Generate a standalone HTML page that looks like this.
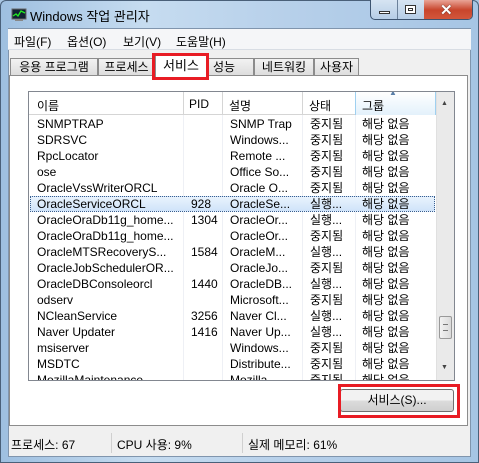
<!DOCTYPE html>
<html><head><meta charset="utf-8"><style>
*{margin:0;padding:0;box-sizing:border-box}
body{width:479px;height:463px;overflow:hidden;position:relative;font-family:"Liberation Sans","Noto Sans CJK KR","NanumGothic",sans-serif;font-size:12px;color:#000;background:#a9c6e3}
.a{position:absolute}
.frame{left:0;top:0;width:479px;height:463px;background:linear-gradient(90deg,#9ebfe0,#c6dcf0 30%,#b7d0ea 60%,#a6c5e4);border:1px solid #4a6079;border-radius:6px 6px 0 0}
.title{left:30px;top:6px;font-size:13px}
.client{left:8px;top:28px;width:463px;height:429px;background:#f0f0f0;border:1px solid #8095ad}
.menu{left:8px;top:29px;width:463px;height:21px;background:#f5f6f8;border-bottom:1px solid #d8dde4}
.menu span{position:absolute;top:4px}
.tab{top:58px;height:18px;border:1px solid #8c8c8c;border-bottom:none;background:linear-gradient(#f2f2f2,#dcdcdc);text-align:center;line-height:17px;font-size:12px}
.panel{left:9px;top:75px;width:459px;height:351px;background:#fff;border:1px solid #8c8c8c}
.list{left:28px;top:91px;width:427px;height:290px;border:1px solid #828790;background:#fff;overflow:hidden}
.hdr{position:absolute;left:0;top:0;height:23px;width:407px;border-bottom:1px solid #d5d5d5;background:#fff}
.hdr span{position:absolute;top:5px}
.vl{position:absolute;top:0;width:1px;height:290px;background:#eef0f5}
.hv{position:absolute;top:0;width:1px;height:23px;background:#d5d5d5}
.row{position:absolute;left:0;width:407px;height:16px;line-height:16px;white-space:nowrap}
.row span{position:absolute;top:0}
.sb{position:absolute;left:407px;top:0;width:18px;height:288px;background:#eaeaea;border-left:1px solid #e0e0e0}
.btn{left:340px;top:389px;width:114px;height:23px;border:1px solid #707070;border-radius:3px;background:linear-gradient(#f2f2f2 50%,#dcdcdc 50%,#cfcfcf);text-align:center;line-height:21px}
.red{border:3px solid #e81c24}
.status{left:9px;top:431px;width:459px;height:24px}
.status span{position:absolute;top:5px}
</style></head><body>
<div class="a frame"></div>
<svg class="a" style="left:11px;top:8px" width="16" height="14"><rect x="1" y="1" width="14" height="10" fill="#123" stroke="#666"/><polyline points="2,8 5,6 7,8 10,3 14,5" fill="none" stroke="#2e2" stroke-width="1.3"/><rect x="4" y="11" width="8" height="2" fill="#888"/></svg>
<div class="a title">Windows 작업 관리자</div>
<div class="a" style="left:370px;top:0;width:103px;height:20px;border:1px solid #3d5470;border-top:none;border-radius:0 0 5px 5px;overflow:hidden;background:linear-gradient(#d6e4f2,#b6cde6)">
<div class="a" style="left:26px;top:0;width:1px;height:20px;background:#6b819a"></div>
<div class="a" style="left:53px;top:0;width:50px;height:20px;background:linear-gradient(#e9a597,#c8452c 50%,#d4583d)"></div>
<div class="a" style="left:8px;top:11px;width:11px;height:3px;background:#fff;border:1px solid #333"></div>
<div class="a" style="left:34px;top:5px;width:11px;height:9px;border:1px solid #333;background:#fff"><div style="margin:2px;width:5px;height:3px;border:1px solid #333"></div></div>
<div class="a" style="left:69px;top:1px;color:#fff;font-weight:bold;font-size:15px;text-shadow:0 0 1px #000">✕</div>
</div>
<div class="a client"></div>
<div class="a menu"><span style="left:6px">파일(F)</span><span style="left:59px">옵션(O)</span><span style="left:115px">보기(V)</span><span style="left:168px">도움말(H)</span></div>
<div class="a tab" style="left:10px;width:88px">응용 프로그램</div>
<div class="a tab" style="left:98px;width:57px">프로세스</div>
<div class="a tab" style="left:208px;width:46px;text-align:left;padding-left:4px">성능</div>
<div class="a tab" style="left:254px;width:60px">네트워킹</div>
<div class="a tab" style="left:314px;width:45px">사용자</div>
<div class="a panel"></div>
<div class="a" style="left:155px;top:55px;width:52px;height:22px;background:#fff;border:1px solid #8c8c8c;border-bottom:none;text-align:center;line-height:20px;font-size:13px">서비스</div>
<div class="a red" style="left:152px;top:53px;width:57px;height:27px"></div>
<div class="a list">
<div class="vl" style="left:154px"></div><div class="vl" style="left:193px"></div><div class="vl" style="left:273px"></div><div class="vl" style="left:326px"></div>
<div class="hdr"><span style="left:8px">이름</span><span style="left:160px">PID</span><span style="left:200px">설명</span><span style="left:280px">상태</span>
<div style="position:absolute;left:326px;top:0;width:81px;height:23px;background:linear-gradient(#fff,#e3f1fb);border-left:1px solid #9fd0f0;border-right:1px solid #9fd0f0"></div><span style="left:333px">그룹</span><span style="left:360px;top:-4px;font-size:8px;color:#5a7fa8">▲</span>
<div class="hv" style="left:154px"></div><div class="hv" style="left:193px"></div><div class="hv" style="left:273px"></div></div>
<div style="position:absolute;left:1px;top:104px;width:405px;height:16px;background:linear-gradient(#e9f3fd,#cfe3f9);border:1px dotted #3a5f8f"></div>
<div id="rows"></div>
<div class="sb"><div style="position:absolute;left:4px;top:8px;font-size:7px;color:#444">▲</div><div style="position:absolute;left:2px;top:224px;width:13px;height:23px;border:1px solid #999;border-radius:2px;background:linear-gradient(90deg,#f2f2f2,#dadada)"><div style="margin:7px 3px;height:7px;border-top:1px solid #777;border-bottom:1px solid #777"></div></div><div style="position:absolute;left:4px;top:272px;font-size:7px;color:#444">▼</div></div>
</div>
<div class="a btn">서비스(S)...</div>
<div class="a red" style="left:338px;top:384px;width:122px;height:34px"></div>
<div class="a status"><span style="left:2px">프로세스: 67</span><span style="left:108px">CPU 사용: 9%</span><span style="left:239px">실제 메모리: 61%</span>
<div class="a" style="left:102px;top:2px;width:1px;height:20px;background:#d0d0d0"></div><div class="a" style="left:233px;top:2px;width:1px;height:20px;background:#d0d0d0"></div></div>
<script>
var d=[["SNMPTRAP","","SNMP Trap","중지됨"],["SDRSVC","","Windows...","중지됨"],["RpcLocator","","Remote ...","중지됨"],["ose","","Office So...","중지됨"],["OracleVssWriterORCL","","Oracle O...","중지됨"],["OracleServiceORCL","928","OracleSe...","실행..."],["OracleOraDb11g_home...","1304","OracleOr...","실행..."],["OracleOraDb11g_home...","","OracleOr...","중지됨"],["OracleMTSRecoveryS...","1584","OracleM...","실행..."],["OracleJobSchedulerOR...","","OracleJo...","중지됨"],["OracleDBConsoleorcl","1440","OracleDB...","실행..."],["odserv","","Microsoft...","중지됨"],["NCleanService","3256","Naver Cl...","실행..."],["Naver Updater","1416","Naver Up...","실행..."],["msiserver","","Windows...","중지됨"],["MSDTC","","Distribute...","중지됨"],["MozillaMaintenance","","Mozilla ...","중지됨"]];
var h="";d.forEach(function(r,i){h+='<div class="row" style="top:'+(24+i*16)+'px"><span style="left:8px">'+r[0]+'</span><span style="left:162px">'+r[1]+'</span><span style="left:201px">'+r[2]+'</span><span style="left:281px">'+r[3]+'</span><span style="left:333px">해당 없음</span></div>';});
document.getElementById("rows").innerHTML=h;
</script>
</body></html>
